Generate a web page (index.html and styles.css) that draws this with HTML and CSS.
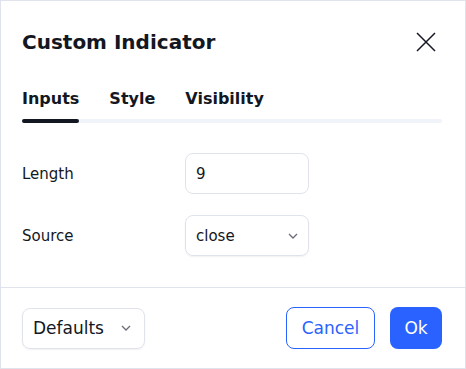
FILE: index.html
```html
<!DOCTYPE html>
<html lang="en">
<head>
    <meta charset="UTF-8">
    <meta name="viewport" content="width=device-width, initial-scale=1.0">
    <title>Custom Indicator</title>
    <link rel="stylesheet" href="styles.css">
</head>
<body>
    <div class="dialog">
        <div class="dialog-header">
            <h1 class="dialog-title">Custom Indicator</h1>
            <button type="button" class="close-btn" aria-label="Close">
                <svg width="20" height="20" viewBox="0 0 20 20">
                    <path d="M1 1L19 19M19 1L1 19" stroke="#131722" stroke-width="1.5" fill="none"/>
                </svg>
            </button>
        </div>

        <div class="tabs">
            <div class="tab-list">
                <span class="tab active">Inputs</span>
                <span class="tab">Style</span>
                <span class="tab">Visibility</span>
            </div>
            <div class="tab-track"><div class="tab-indicator"></div></div>
        </div>

        <div class="dialog-body">
            <div class="field">
                <label class="field-label">Length</label>
                <div class="control">9</div>
            </div>
            <div class="field">
                <label class="field-label">Source</label>
                <div class="control select">
                    <span>close</span>
                    <svg class="chevron" width="10" height="6" viewBox="0 0 10 6">
                        <path d="M1 1L5 5L9 1" stroke="#6a6d78" stroke-width="1.3" fill="none"/>
                    </svg>
                </div>
            </div>
        </div>

        <div class="dialog-footer">
            <div class="control select defaults">
                <span>Defaults</span>
                <svg class="chevron" width="10" height="6" viewBox="0 0 10 6">
                    <path d="M1 1L5 5L9 1" stroke="#6a6d78" stroke-width="1.3" fill="none"/>
                </svg>
            </div>
            <div class="actions">
                <button type="button" class="btn btn-outline">Cancel</button>
                <button type="button" class="btn btn-primary">Ok</button>
            </div>
        </div>
    </div>
</body>
</html>
```

FILE: styles.css
```css
* {
    box-sizing: border-box;
}

body {
    margin: 0;
    font-family: "DejaVu Sans", "Open Sans", sans-serif;
    color: #131722;
    background: #fff;
}

.dialog {
    height: 369px;
    width: 466px;
    border: 1px solid #e0e3eb;
    display: flex;
    flex-direction: column;
}

/*****
header
******/
.dialog-header {
    display: flex;
    align-items: center;
    justify-content: space-between;
    height: 40px;
    margin-top: 21px;
    padding: 0 29px 0 21px;
}

.dialog-title {
    margin: 0;
    font-size: 20px;
    font-weight: bold;
}

.close-btn {
    border: none;
    background: none;
    padding: 0;
    width: 20px;
    height: 20px;
    display: flex;
}

/*****
tabs
******/
.tabs {
    padding: 25px 23px 0 21px;
}

.tab-list {
    display: flex;
    gap: 30px;
    padding-bottom: 8px;
}

.tab {
    font-size: 16px;
    font-weight: bold;
    line-height: 24px;
}

.tab-track {
    height: 4px;
    border-radius: 2px;
    background: #f0f3fa;
}

.tab-indicator {
    width: 57px;
    height: 4px;
    border-radius: 2px;
    background: #131722;
}

/*****
body
******/
.dialog-body {
    flex: 1;
    padding: 30px 0 0 21px;
    display: flex;
    flex-direction: column;
    gap: 21px;
}

.field {
    display: flex;
    align-items: center;
}

.field-label {
    width: 163px;
    font-size: 15px;
}

.control {
    width: 124px;
    height: 41px;
    border: 1px solid #e0e3eb;
    border-radius: 8px;
    padding: 0 10px;
    display: flex;
    align-items: center;
    font-size: 15px;
}

.select {
    justify-content: space-between;
    box-shadow: 0 1px 2px rgba(19, 23, 34, 0.06);
}

/*****
footer
******/
.dialog-footer {
    border-top: 1px solid #e0e3eb;
    padding: 19px 23px 19px 21px;
    display: flex;
    justify-content: space-between;
    align-items: center;
}

.defaults {
    width: 123px;
    font-size: 17px;
    padding-right: 13px;
}

.actions {
    display: flex;
    gap: 15px;
}

.btn {
    height: 42px;
    border-radius: 8px;
    font-family: inherit;
    font-size: 17px;
    padding: 0;
}

.btn-outline {
    width: 89px;
    background: #fff;
    color: #2962ff;
    border: 1px solid #2962ff;
}

.btn-primary {
    width: 52px;
    background: #2962ff;
    color: #fff;
    border: none;
}
```
